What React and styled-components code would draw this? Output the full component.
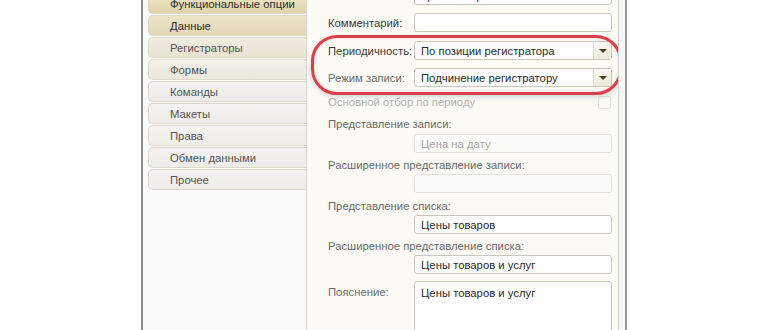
import React from 'react';
import styled, { createGlobalStyle } from 'styled-components';

const GlobalStyle = createGlobalStyle`
  html, body {
    margin: 0;
    padding: 0;
    background: #ffffff;
    font-family: "Liberation Sans", Arial, sans-serif;
  }
`;

const Page = styled.div`
  width: 770px;
  height: 330px;
  overflow: hidden;
  display: flex;
  background: #ffffff;
`;

const Gutter = styled.div`
  width: 141px;
  flex-shrink: 0;
`;

const Window = styled.div`
  display: flex;
  height: 330px;
  border-left: 2px solid #8e8e8e;
  border-right: 2px solid #9a9a9a;
`;

const Sidebar = styled.div`
  width: 164px;
  background: #fafaf8;
  border-right: 1px solid #d6d5cf;
  padding-left: 5px;
  box-sizing: border-box;
`;

const TabList = styled.div`
  display: flex;
  flex-direction: column;
  gap: 1px;
  margin-top: -7px;
`;

const tones = [
  'linear-gradient(#efe6c4, #e0d4a9)',
  'linear-gradient(#ece4c8, #e2d8b8)',
  'linear-gradient(#f1ede0, #e8e2cf)',
  'linear-gradient(#f3f1ea, #ebe8dd)',
  'linear-gradient(#f4f3ef, #eeece7)',
];

const Tab = styled.div`
  height: 21px;
  flex-shrink: 0;
  box-sizing: border-box;
  display: flex;
  align-items: center;
  padding-left: 21px;
  font-size: 11.3px;
  color: ${p => (p.tone < 2 ? '#2e2e2e' : '#555555')};
  background: ${p => tones[Math.min(p.tone, 4)]};
  border: 1px solid #dcd8cb;
  border-right: none;
  border-radius: 5px 0 0 5px;
`;

const Content = styled.div`
  position: relative;
  width: 312px;
  background: #fcfbf6;
  border-right: 1px solid #d0cfc8;
  padding: 0 6px 0 21px;
  box-sizing: border-box;
  display: flex;
  flex-direction: column;
  overflow: hidden;
`;

const Edge = styled.div`
  width: 6px;
  background: #f6f6f2;
`;

const Row = styled.div`
  display: flex;
  flex-shrink: 0;
  align-items: ${p => (p.tall ? 'flex-start' : 'center')};
  margin-top: ${p => p.top}px;
  height: ${p => p.h || 19}px;
`;

const Label = styled.div`
  width: 86px;
  flex-shrink: 0;
  font-size: 11.3px;
  padding-top: ${p => (p.tall ? '5px' : '0')};
  color: ${p => (p.dim ? '#6c6c6c' : '#3a3a3a')};
  white-space: nowrap;
`;

const Caption = styled.div`
  font-size: 11.3px;
  color: ${p => (p.off ? '#b4b4b0' : '#6a6a6a')};
  white-space: nowrap;
  flex: 1;
`;

const Field = styled.div`
  flex: 1;
  height: 100%;
  box-sizing: border-box;
  margin-left: ${p => (p.indent ? '86px' : '0')};
  border: 1px solid ${p => (p.off ? '#e2e1db' : '#c8c6bd')};
  border-radius: 3px;
  background: ${p => (p.off ? '#fbfbf8' : '#ffffff')};
  font-size: 11.3px;
  color: ${p => (p.off ? '#a8a8a8' : '#2c2c2c')};
  padding: ${p => (p.tall ? '5px 6px' : '0 6px')};
  display: flex;
  align-items: ${p => (p.tall ? 'flex-start' : 'center')};
  white-space: nowrap;
`;

const Combo = styled(Field)`
  padding-right: 0;
`;

const ComboText = styled.span`
  flex: 1;
`;

const DropButton = styled.div`
  width: 17px;
  height: 100%;
  border-left: 1px solid #dedbd0;
  background: linear-gradient(#fbfaf4, #ece9dc);
  border-radius: 0 2px 2px 0;
  display: flex;
  align-items: center;
  justify-content: center;
`;

const Arrow = styled.div`
  width: 0;
  height: 0;
  border-left: 4px solid transparent;
  border-right: 4px solid transparent;
  border-top: 4px solid #4e4418;
`;

const Check = styled.div`
  width: 11px;
  height: 11px;
  border: 1px solid #e3e2dc;
  border-radius: 2px;
  background: #fbfbf8;
  margin-right: 1px;
`;

const Highlight = styled.div`
  position: absolute;
  left: 4px;
  top: 35px;
  width: 311px;
  height: 60px;
  border: 3px solid #dc3f4c;
  border-radius: 26px;
  box-sizing: border-box;
  box-shadow: 0 2px 5px rgba(120, 140, 140, 0.35), inset 0 0 3px rgba(220, 63, 76, 0.25);
  pointer-events: none;
`;

const tabs = [
  'Функциональные опции',
  'Данные',
  'Регистраторы',
  'Формы',
  'Команды',
  'Макеты',
  'Права',
  'Обмен данными',
  'Прочее',
];

const Combobox = ({ value }) => (
  <Combo>
    <ComboText>{value}</ComboText>
    <DropButton>
      <Arrow />
    </DropButton>
  </Combo>
);

export default function App() {
  return (
    <>
      <GlobalStyle />
      <Page>
        <Gutter />
        <Window>
          <Sidebar>
            <TabList>
              {tabs.map((t, i) => (
                <Tab key={t} tone={i}>{t}</Tab>
              ))}
            </TabList>
          </Sidebar>
          <Content>
            <Row top={-14}>
              <Field indent>Цены товаров</Field>
            </Row>
            <Row top={8}>
              <Label>Комментарий:</Label>
              <Field />
            </Row>
            <Row top={9}>
              <Label>Периодичность:</Label>
              <Combobox value="По позиции регистратора" />
            </Row>
            <Row top={8}>
              <Label dim>Режим записи:</Label>
              <Combobox value="Подчинение регистратору" />
            </Row>
            <Row top={8} h={14}>
              <Caption off>Основной отбор по периоду</Caption>
              <Check />
            </Row>
            <Row top={8} h={14}>
              <Caption>Представление записи:</Caption>
            </Row>
            <Row top={3}>
              <Field indent off>Цена на дату</Field>
            </Row>
            <Row top={5} h={14}>
              <Caption>Расширенное представление записи:</Caption>
            </Row>
            <Row top={2}>
              <Field indent off />
            </Row>
            <Row top={6} h={14}>
              <Caption>Представление списка:</Caption>
            </Row>
            <Row top={2}>
              <Field indent>Цены товаров</Field>
            </Row>
            <Row top={5} h={14}>
              <Caption>Расширенное представление списка:</Caption>
            </Row>
            <Row top={2}>
              <Field indent>Цены товаров и услуг</Field>
            </Row>
            <Row top={7} h={60} tall>
              <Label dim tall>Пояснение:</Label>
              <Field tall>Цены товаров и услуг</Field>
            </Row>
            <Highlight />
          </Content>
          <Edge />
        </Window>
      </Page>
    </>
  );
}
